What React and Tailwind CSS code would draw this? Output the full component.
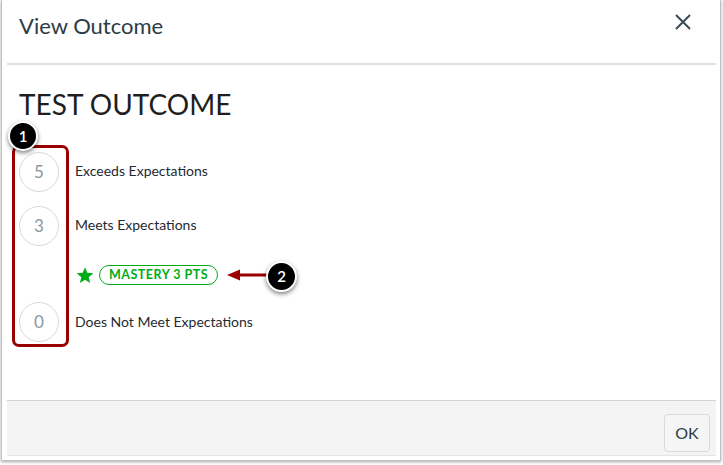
export default function App() {
  const font = { fontFamily: "Lato, 'Open Sans', sans-serif" };
  return (
    <div className="relative w-[723px] h-[465px] bg-white pl-px overflow-hidden" style={font}>
      <div className="w-[720px] h-[461px] border-l border-r border-b border-[#c3c3c3] shadow-[0_1px_3px_rgba(0,0,0,0.35)] flex flex-col pl-[5px] pr-[4px] pb-[4px] bg-white">
        {/* header */}
        <div className="h-[63px] flex items-start justify-between pl-[12px] pr-[25px]">
          <div className="mt-[12px] text-[22px] leading-[27px] text-[#2d3b45]">View Outcome</div>
          <svg className="mt-[14px]" width="16" height="16" viewBox="0 0 16 16" fill="none" stroke="#394b58" strokeWidth="2">
            <path d="M1 1 L15 15 M15 1 L1 15" />
          </svg>
        </div>
        <div className="h-[2px] bg-[#dfe2e5]" />
        {/* body */}
        <div className="flex-1 pl-[12px] flex flex-col">
          <div className="mt-[22px] text-[28px] leading-[34px] text-[#1f1f1f]">TEST OUTCOME</div>
          <div className="mt-[31px] flex flex-col">
            <div className="flex items-center h-[40px]">
              <div className="w-[40px] h-[40px] rounded-full border border-[#d6d9dc] flex items-center justify-center text-[17px] text-[#8b969e]">5</div>
              <div className="ml-[16px] text-[14px] leading-[18px] text-[#1f2a32] -mt-[2px]">Exceeds Expectations</div>
            </div>
            <div className="flex items-center h-[40px] mt-[14px]">
              <div className="w-[40px] h-[40px] rounded-full border border-[#d6d9dc] flex items-center justify-center text-[17px] text-[#8b969e]">3</div>
              <div className="ml-[16px] text-[14px] leading-[18px] text-[#1f2a32] -mt-[2px]">Meets Expectations</div>
            </div>
            <div className="flex items-center h-[20px] mt-[19px] pl-[57px]">
              <svg width="18" height="17" viewBox="0 0 24 23" fill="#00ac18">
                <path d="M12 0.5 L15.1 7.9 L23.2 8.5 L17 13.8 L19 21.7 L12 17.4 L5 21.7 L7 13.8 L0.8 8.5 L8.9 7.9 Z" />
              </svg>
              <div className="ml-[5px] h-[20px] px-[9px] rounded-full border border-[#00ac18] flex items-center text-[12.5px] font-bold tracking-[0.5px] text-[#00ac18]">
                MASTERY 3 PTS
              </div>
            </div>
            <div className="flex items-center h-[40px] mt-[17px]">
              <div className="w-[40px] h-[40px] rounded-full border border-[#d6d9dc] flex items-center justify-center text-[17px] text-[#8b969e]">0</div>
              <div className="ml-[16px] text-[14px] leading-[18px] text-[#1f2a32] -mt-[1px]">Does Not Meet Expectations</div>
            </div>
          </div>
        </div>
        {/* footer */}
        <div className="h-[56px] border-t border-[#cfd3d6] border-b border-b-[#e4e4e4] bg-[#f4f4f4] flex items-start justify-end pr-[6px]">
          <div className="mt-[13px] w-[46px] h-[38px] rounded-[4px] border border-[#d7dadd] bg-[#f5f5f5] flex items-center justify-center text-[16px] text-[#2d3b45]">OK</div>
        </div>
      </div>

      {/* annotations */}
      <div className="absolute left-[12px] top-[145px] w-[57px] h-[202px] border-[3px] border-[#990000] rounded-[7px]" />
      <div className="absolute left-[8px] top-[121px] w-[30px] h-[30px] rounded-full bg-black border-2 border-white shadow-[0_2px_4px_rgba(0,0,0,0.5)] flex items-center justify-center text-white text-[15px] font-semibold">1</div>
      <svg className="absolute left-[227px] top-[268px]" width="42" height="14" viewBox="0 0 42 14">
        <path d="M10 7 H42" stroke="#990000" strokeWidth="3" />
        <path d="M0 7 L13 1.5 L13 12.5 Z" fill="#990000" />
      </svg>
      <div className="absolute left-[266px] top-[261px] w-[31px] h-[31px] rounded-full bg-black border-2 border-white shadow-[0_2px_4px_rgba(0,0,0,0.5)] flex items-center justify-center text-white text-[15px] font-semibold">2</div>
    </div>
  );
}
